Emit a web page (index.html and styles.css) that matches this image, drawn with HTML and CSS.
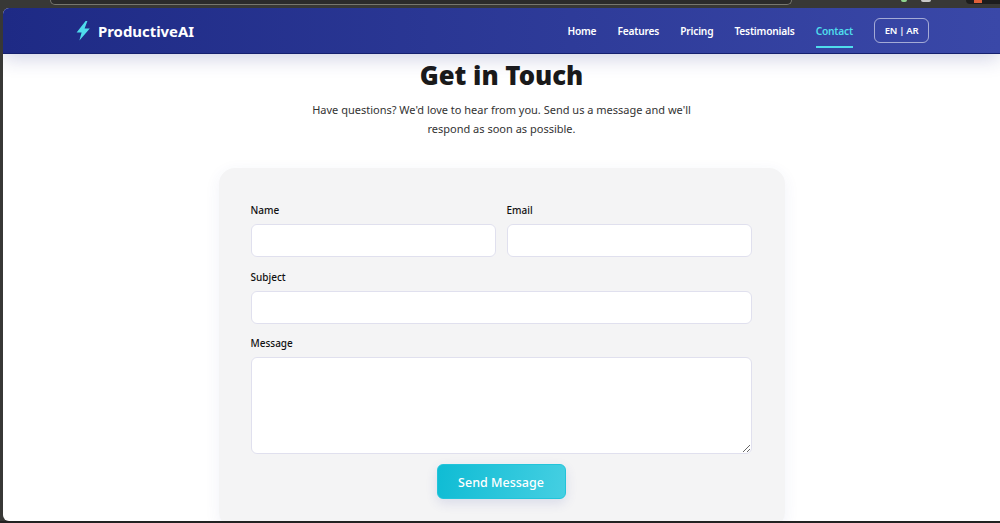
FILE: index.html
```html
<!DOCTYPE html>
<html lang="en">
<head>
<meta charset="utf-8">
<title>ProductiveAI - Contact</title>
<link rel="stylesheet" href="styles.css">
</head>
<body>
<div class="chrome-strip">
  <div class="address-bar"></div>
  <div class="chrome-dots">
    <span class="dot dot-green"></span>
    <span class="dot dot-grey"></span>
    <span class="chrome-pill"><span class="pill-mark"></span></span>
  </div>
</div>
<div class="window">
  <header class="navbar">
    <a class="brand" href="#">
      <svg class="bolt" viewBox="0 0 14 20" width="14" height="20" aria-hidden="true"><path d="M9.6 0 .6 11.6h5L3.4 19.6 13.8 7.4H8.6L11.4 0z" fill="#4fdcec"/></svg>
      <span>ProductiveAI</span>
    </a>
    <nav class="nav-links">
      <a href="#">Home</a>
      <a href="#">Features</a>
      <a href="#">Pricing</a>
      <a href="#">Testimonials</a>
      <a class="active" href="#">Contact</a>
      <button class="lang" type="button">EN | AR</button>
    </nav>
  </header>
  <main class="content">
    <h1>Get in Touch</h1>
    <p class="lead">Have questions? We'd love to hear from you. Send us a message and we'll respond as soon as possible.</p>
    <form class="card">
      <div class="row">
        <div class="field"><label>Name</label><input type="text"></div>
        <div class="field"><label>Email</label><input type="email"></div>
      </div>
      <div class="field"><label>Subject</label><input type="text"></div>
      <div class="field"><label>Message</label><textarea></textarea></div>
      <div class="actions"><button class="send" type="button">Send Message</button></div>
    </form>
  </main>
</div>
<div class="bottom-strip"></div>
</body>
</html>
```

FILE: styles.css
```css
* { box-sizing: border-box; }
html, body { margin: 0; height: 523px; overflow: hidden; }
body {
  background: #383836;
  font-family: "Noto Sans", "Open Sans", sans-serif;
  color: #1a1a1a;
  display: flex;
  flex-direction: column;
}
.chrome-strip {
  height: 8px;
  flex: none;
  display: flex;
  justify-content: space-between;
}
.address-bar {
  width: 742px;
  height: 5px;
  margin-left: 50px;
  border: 1px solid #77776f;
  border-top: 0;
  border-radius: 0 0 8px 8px;
  background: #2b2b2b;
}
.chrome-dots { display: flex; align-items: flex-start; gap: 14px; }
.dot { width: 6px; height: 2px; border-radius: 0 0 4px 4px; }
.dot-green { background: #8fd48f; }
.dot-grey { background: #c8c8c8; width: 10px; }
.chrome-pill { width: 34px; height: 4px; background: #1d1d1d; border-radius: 0 0 0 6px; margin-left: 21px; }
.pill-mark { display: block; width: 8px; height: 3px; margin-left: 8px; background: #e0603a; }
.window {
  flex: none;
  height: 513px;
  margin-left: 3px;
  background: #fff;
  border-radius: 6px 0 0 6px;
  overflow: hidden;
}
.navbar {
  height: 46px;
  padding: 0 71px 0 73px;
  display: flex;
  align-items: center;
  justify-content: space-between;
  background: linear-gradient(90deg, #1e2a85 0%, #3a48a8 100%);
  border-bottom: 1px solid #15206f;
  box-shadow: 0 4px 20px rgba(30, 42, 133, .22);
  position: relative;
  z-index: 2;
}
.brand {
  display: flex;
  align-items: center;
  gap: 8px;
  color: #fff;
  text-decoration: none;
  font-size: 14.9px;
  font-weight: 700;
}
.nav-links { display: flex; align-items: center; gap: 21px; }
.nav-links a {
  color: #fff;
  text-decoration: none;
  font-size: 10.2px;
  font-weight: 600;
  letter-spacing: -.18px;
  line-height: 15px;
  padding: 8.5px 0 6.5px;
  border-top: 2px solid transparent;
  border-bottom: 2px solid transparent;
}
.nav-links a.active { color: #4fdcec; border-bottom-color: #4fdcec; }
.lang {
  width: 55px;
  height: 25px;
  padding: 0;
  background: transparent;
  color: #fff;
  border: 1px solid rgba(255, 255, 255, .55);
  border-radius: 6px;
  font: 600 9.5px "Noto Sans", sans-serif;
  letter-spacing: -.3px;
}
.content {
  display: flex;
  flex-direction: column;
  align-items: center;
}
h1 {
  margin: 6px 0 0;
  font-size: 25.7px;
  font-weight: 900;
  line-height: 31px;
  color: #1a1a1a;
}
.lead {
  margin: 9px 0 0;
  width: 400px;
  font-size: 11px;
  line-height: 19px;
  text-align: center;
  color: #333;
}
.card {
  margin-top: 30px;
  width: 566px;
  padding: 35px 33px 0 32px;
  height: 360px;
  background: #f4f4f5;
  border-radius: 16px;
  box-shadow: 0 4px 16px rgba(60, 70, 160, .07);
  display: flex;
  flex-direction: column;
  gap: 12.5px;
}
.row { display: flex; gap: 11px; }
.row .field { flex: 1; }
.field { display: flex; flex-direction: column; }
label {
  font-size: 10px;
  font-weight: 500;
  color: #111;
  line-height: 14px;
  margin-bottom: 7px;
}
input, textarea {
  display: block;
  width: 100%;
  background: #fff;
  border: 1px solid #e0e0ee;
  border-radius: 6px;
}
input { height: 33px; }
textarea { height: 96.5px; resize: vertical; }
.actions { display: flex; justify-content: center; margin-top: -2px; }
.send {
  width: 129px;
  height: 35px;
  padding: 1px 0 0;
  color: #fff;
  font: 500 12.5px "Noto Sans", sans-serif;
  border: 1px solid #22c4da;
  border-radius: 6px;
  background: linear-gradient(100deg, #0fbcd4 0%, #45cfe2 100%);
  box-shadow: 0 4px 12px rgba(60, 70, 160, .14);
}
.bottom-strip { flex: none; height: 2px; background: #222; }
```
